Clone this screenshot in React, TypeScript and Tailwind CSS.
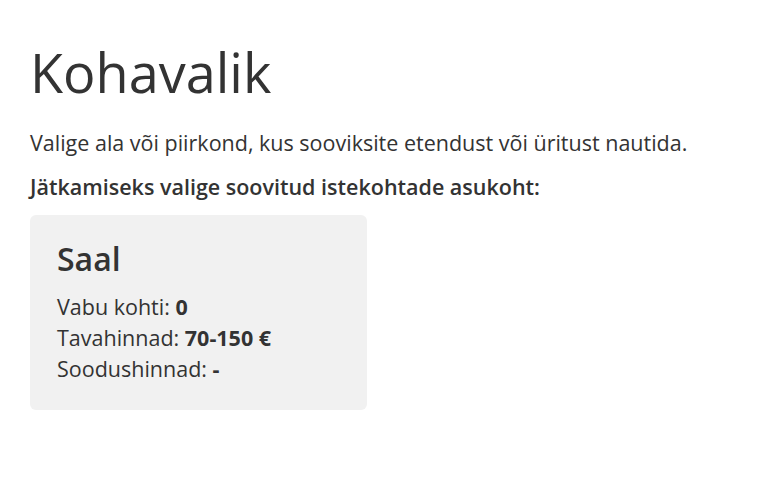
export default function App() {
  return (
    <div className="min-h-screen bg-white text-[#333] px-[30px] pt-[36px]" style={{ fontFamily: '"Open Sans", sans-serif' }}>
      <h1 className="text-[54px] leading-[72px] font-normal">Kohavalik</h1>
      <p className="text-[21.5px] leading-[30px] mt-[20px]">Valige ala või piirkond, kus sooviksite etendust või üritust nautida.</p>
      <p className="text-[21.5px] leading-[30px] font-semibold mt-[14px]">Jätkamiseks valige soovitud istekohtade asukoht:</p>
      <div className="mt-[13px] w-[337px] h-[195px] bg-[#f1f1f1] rounded-[6px] px-[27px] pt-[24px]">
        <h2 className="text-[32px] leading-[40px] font-semibold">Saal</h2>
        <div className="mt-[12px] text-[21.5px] leading-[31px]">
          <div>Vabu kohti: <b className="font-bold">0</b></div>
          <div>Tavahinnad: <b className="font-bold">70-150 €</b></div>
          <div>Soodushinnad: <b className="font-bold">-</b></div>
        </div>
      </div>
    </div>
  );
}
